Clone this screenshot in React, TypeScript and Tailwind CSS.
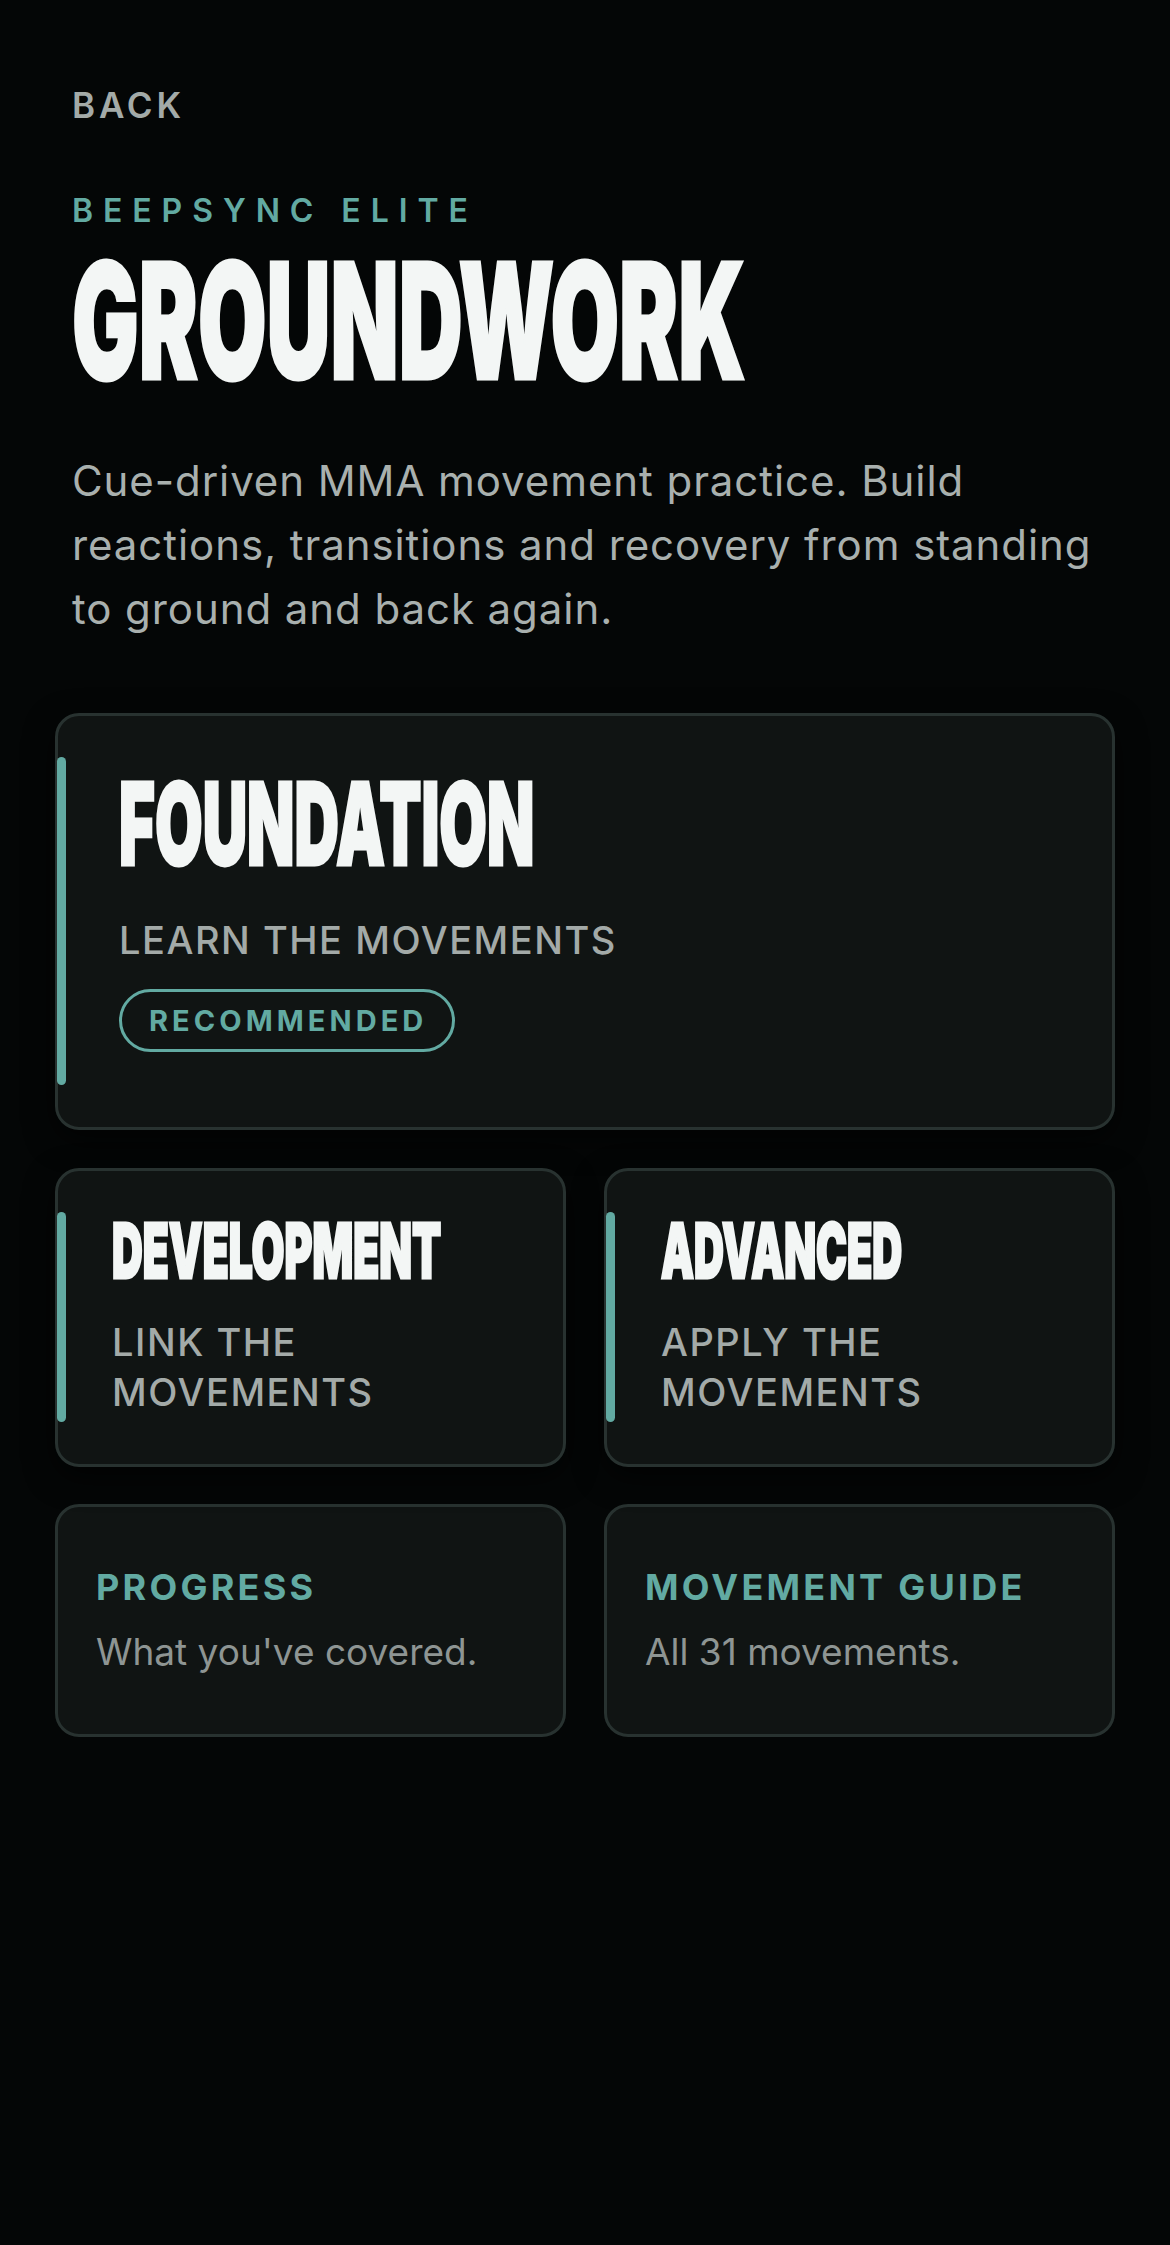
import React from "react";

const heading = "font-['Inter','Roboto',sans-serif] font-black text-[#f3f6f5] leading-none inline-block origin-top-left whitespace-nowrap [-webkit-text-stroke:1.65px_#f3f6f5]";

function Bar() {
  return <div className="absolute left-[-1px] top-[41px] bottom-[42px] w-[9px] rounded-full bg-[#62aaa2]" />;
}

function LevelCard({ title, sub, cls }: { title: string; sub: string[]; cls: string }) {
  return (
    <div className="relative rounded-[24px] border-[3px] border-[#283230] bg-[#101413] pl-[54px] pt-[43px] pb-[47px] shadow-[0_10px_30px_rgba(0,0,0,0.6)]">
      <Bar />
      <div className="h-[76px]">
        <span className={heading + " " + cls}>{title}</span>
      </div>
      <div className="mt-[27px] text-[38px] leading-[50px] font-medium tracking-[0.04em] text-[#a3aaa8]">
        {sub.map((s) => (
          <div key={s}>{s}</div>
        ))}
      </div>
    </div>
  );
}

function LinkCard({ title, sub }: { title: string; sub: string }) {
  return (
    <div className="rounded-[24px] border-[3px] border-[#283230] bg-[#101413] pl-[38px] pt-[62px] pb-[64px]">
      <div className="text-[36px] leading-[36px] font-bold tracking-[0.09em] text-[#62aaa2]">{title}</div>
      <div className="mt-[28px] text-[37px] leading-[37px] text-[#8e9593]">{sub}</div>
    </div>
  );
}

export default function App() {
  return (
    <div className="min-h-[2245px] w-full bg-[#040606] font-['Inter','Roboto',sans-serif] px-[55px] pt-[88px] pb-[100px]">
      <div className="px-[17px]">
        <div className="text-[35px] leading-[34px] font-semibold tracking-[0.11em] text-[#a3aaa8]">BACK</div>
        <div className="mt-[73px] text-[32px] leading-[32px] font-semibold tracking-[0.31em] text-[#62aaa2]">BEEPSYNC ELITE</div>
        <div className="mt-[14px] h-[161px]">
          <span className={heading + " text-[88.55px] scale-y-[1.818]"}>GROUNDWORK</span>
        </div>
        <p className="mt-[47px] text-[42px] leading-[64px] tracking-[0.022em] text-[#a9b0ae]">
          Cue-driven MMA movement practice. Build reactions, transitions and recovery from standing to ground and back again.
        </p>
      </div>

      <div className="relative mt-[72px] rounded-[24px] border-[3px] border-[#283230] bg-[#101413] pl-[61px] pt-[51px] pb-[75px] shadow-[0_10px_30px_rgba(0,0,0,0.6)]">
        <Bar />
        <div className="h-[114px]">
          <span className={heading + " text-[61.56px] scale-y-[1.852]"}>FOUNDATION</span>
        </div>
        <div className="mt-[41px] text-[38px] leading-[37px] font-medium tracking-[0.04em] text-[#a3aaa8]">LEARN THE MOVEMENTS</div>
        <div className="mt-[30px] inline-flex h-[63px] items-center rounded-full border-[3px] border-[#62aaa2] pl-[27px] pr-[25px] text-[29px] font-bold tracking-[0.14em] text-[#62aaa2]">
          RECOMMENDED
        </div>
      </div>

      <div className="mt-[38px] grid grid-cols-2 gap-[38px]">
        <LevelCard title="DEVELOPMENT" sub={["LINK THE", "MOVEMENTS"]} cls="text-[42.56px] scale-y-[1.786]" />
        <LevelCard title="ADVANCED" sub={["APPLY THE", "MOVEMENTS"]} cls="text-[41.42px] scale-y-[1.835]" />
      </div>

      <div className="mt-[37px] grid grid-cols-2 gap-[38px]">
        <LinkCard title="PROGRESS" sub="What you've covered." />
        <LinkCard title="MOVEMENT GUIDE" sub="All 31 movements." />
      </div>
    </div>
  );
}
